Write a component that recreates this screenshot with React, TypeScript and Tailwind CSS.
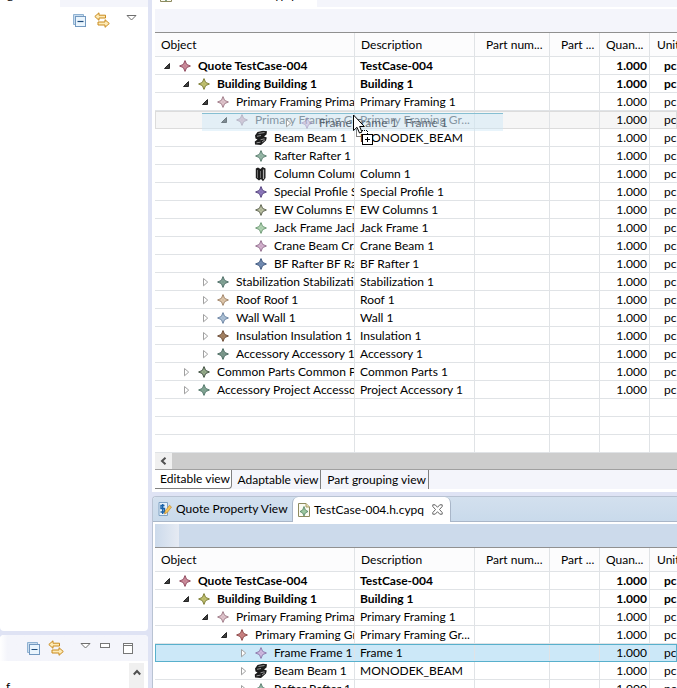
import React from "react";

type Row = {
  depth: number;
  icon: string;
  fill?: string;
  stroke?: string;
  state?: "open" | "closed" | "leaf";
  object: string;
  description: string;
  bold?: boolean;
  mark?: "hover" | "selected";
};

const editorRows: Row[] = [
  { depth: 0, icon: "star", fill: "#d99aa8", stroke: "#8f4a5e", state: "open", object: "Quote TestCase-004", description: "TestCase-004", bold: true },
  { depth: 1, icon: "star", fill: "#cfcf7c", stroke: "#7d7d35", state: "open", object: "Building Building 1", description: "Building 1", bold: true },
  { depth: 2, icon: "star", fill: "#ecd3da", stroke: "#a07c88", state: "open", object: "Primary Framing Primary Framing 1", description: "Primary Framing 1" },
  { depth: 3, icon: "star", fill: "#dcb9c8", stroke: "#a48d9f", state: "open", object: "Primary Framing Group 1", description: "Primary Framing Gr...", mark: "hover" },
  { depth: 4, icon: "beam", state: "leaf", object: "Beam Beam 1", description: "MONODEK_BEAM" },
  { depth: 4, icon: "star", fill: "#a3c4b3", stroke: "#5c7f70", state: "leaf", object: "Rafter Rafter 1", description: "" },
  { depth: 4, icon: "column", state: "leaf", object: "Column Column 1", description: "Column 1" },
  { depth: 4, icon: "star", fill: "#9a86c9", stroke: "#55437f", state: "leaf", object: "Special Profile Special", description: "Special Profile 1" },
  { depth: 4, icon: "star", fill: "#cdd3b2", stroke: "#5e6450", state: "leaf", object: "EW Columns EW Columns", description: "EW Columns 1" },
  { depth: 4, icon: "star", fill: "#c0e0c0", stroke: "#6f9a76", state: "leaf", object: "Jack Frame Jack Frame 1", description: "Jack Frame 1" },
  { depth: 4, icon: "star", fill: "#e0bfdc", stroke: "#94708f", state: "leaf", object: "Crane Beam Crane Beam 1", description: "Crane Beam 1" },
  { depth: 4, icon: "star", fill: "#7f97bd", stroke: "#3f587f", state: "leaf", object: "BF Rafter BF Rafter 1", description: "BF Rafter 1" },
  { depth: 2, icon: "star", fill: "#8fae9f", stroke: "#4f6f68", state: "closed", object: "Stabilization Stabilization 1", description: "Stabilization 1" },
  { depth: 2, icon: "star", fill: "#ead5b9", stroke: "#a08468", state: "closed", object: "Roof Roof 1", description: "Roof 1" },
  { depth: 2, icon: "star", fill: "#b9cde0", stroke: "#6c84a3", state: "closed", object: "Wall Wall 1", description: "Wall 1" },
  { depth: 2, icon: "star", fill: "#b08d6c", stroke: "#6c4c36", state: "closed", object: "Insulation Insulation 1", description: "Insulation 1" },
  { depth: 2, icon: "star", fill: "#86a394", stroke: "#4c6b62", state: "closed", object: "Accessory Accessory 1", description: "Accessory 1" },
  { depth: 1, icon: "star", fill: "#a9c09a", stroke: "#3f4f40", state: "closed", object: "Common Parts Common Parts", description: "Common Parts 1" },
  { depth: 1, icon: "star", fill: "#8db09c", stroke: "#52766a", state: "closed", object: "Accessory Project Accessory 1", description: "Project Accessory 1" },
];

const previewRows: Row[] = [
  editorRows[0],
  editorRows[1],
  editorRows[2],
  { ...editorRows[3], fill: "#d79090", stroke: "#8c4747", mark: undefined },
  { depth: 4, icon: "star", fill: "#dcc6ea", stroke: "#8d78ab", state: "closed", object: "Frame Frame 1", description: "Frame 1", mark: "selected" },
  { ...editorRows[4], state: "closed" },
  { ...editorRows[5], state: "closed" },
];

const StarIcon = ({ fill, stroke }: { fill?: string; stroke?: string }) => (
  <svg className="size-3 shrink-0" viewBox="0 0 12 12" aria-hidden="true">
    <path
      d="M6 .6 7.6 4.4 11.4 6 7.6 7.6 6 11.4 4.4 7.6 .6 6 4.4 4.4Z"
      fill={fill}
      stroke={stroke}
      strokeWidth="1"
      strokeLinejoin="round"
    />
    <path d="M6 3V9M3 6H9" stroke={stroke} strokeWidth=".5" opacity=".6" />
  </svg>
);

const BeamIcon = () => (
  <svg className="-ml-px h-4 w-[14px] shrink-0" viewBox="0 0 14 16" aria-hidden="true">
    <path d="M3.500 2 9 .8 13 1.200 12.500 4.500 10 6.500 12.800 7.500 12 10.500 7 15 1 14.500 .8 11.500 3.500 9.500 1.500 8.500 1 5.500Z" fill="#1c1c1c" />
    <path d="M4.500 3.500 10.500 2.500M3 6.300 7 5.500M6.500 9.800 10.500 8.800M2.500 12.800 6.500 12.200M8 12 11 9.800" stroke="#a0a0a0" strokeWidth=".9" />
  </svg>
);

const ColumnIcon = () => (
  <svg className="h-4 w-3 shrink-0" viewBox="0 0 12 16" aria-hidden="true">
    <path d="M.8 2.500 3 1.500 5.500 3 7.500 1 10.500 2.500V12L8 15.200 6 13 4 14.500 .8 12Z" fill="#1d1d1d" />
    <path d="M2.500 4V12M5.500 5V12" stroke="#777" strokeWidth=".9" />
    <path d="M8.500 3.500V13" stroke="#aaa" strokeWidth="1.200" />
  </svg>
);

const RowIcon = ({ row }: { row: Row }) => {
  if (row.icon === "beam") return <BeamIcon />;
  if (row.icon === "column") return <ColumnIcon />;
  return <StarIcon fill={row.fill} stroke={row.stroke} />;
};

const Twisty = ({ state }: { state?: string }) => (
  <svg className="mt-px h-3 w-2 shrink-0" viewBox="0 0 8 12" aria-hidden="true">
    {state === "open" && <path d="M6.500 3.500V8.500H1.500Z" fill="#404040" stroke="#262626" />}
    {state === "closed" && <path d="M2.500 2.500V9.800L6.700 6.100Z" fill="#fff" stroke="#a0a0a0" />}
  </svg>
);

const CollapseIcon = () => (
  <svg className="size-[14px]" viewBox="0 0 14 14" aria-hidden="true">
    <path d="M.5 10.500V.5H10.500V2.500H2.500V10.500Z" fill="#c9dcee" stroke="#8fb2d2" />
    <rect x="2.500" y="2.500" width="10" height="10" fill="#eaf5fd" stroke="#7399c0" />
    <path d="M4.500 7.500H10.500" stroke="#1f4c7c" strokeWidth="1.200" />
  </svg>
);

const LinkIcon = () => (
  <svg className="size-4" viewBox="0 0 16 16" aria-hidden="true">
    <path d="M.8 4.500 5 .8V3.200H11.500V6H5V8.300Z" fill="#fdeab6" stroke="#c98a1c" strokeLinejoin="round" />
    <path d="M15.300 11.500 11 7.700V10H4V13H11V15.300Z" fill="#fdeab6" stroke="#c98a1c" strokeLinejoin="round" />
  </svg>
);

const MenuIcon = () => (
  <svg className="h-[6px] w-[11px]" viewBox="0 0 11 6" aria-hidden="true">
    <path d="M1 .5H10L5.500 5Z" fill="#fff" stroke="#6e6e6e" />
  </svg>
);

const FileIcon = () => (
  <svg className="h-[14px] w-3 shrink-0" viewBox="0 0 12 14" aria-hidden="true">
    <path d="M.5 .5H8L11.500 4V13.500H.5Z" fill="#fbfbf2" stroke="#8d8a5e" />
    <path d="M8 .5V4H11.500" fill="#e8dfb0" stroke="#a89d66" />
    <path d="M6 3.500 7.300 7 10 8.500 7.300 10 6 13 4.700 10 2 8.500 4.700 7Z" fill="#9cc79f" stroke="#4f8060" strokeWidth=".8" />
  </svg>
);

const QuoteIcon = () => (
  <svg className="h-[14px] w-[14px] shrink-0" viewBox="0 0 14 14" aria-hidden="true">
    <path d="M1 .5H9.500V13.500H1Z" fill="#e6f1fa" stroke="#7fa2c4" />
    <path d="M6.500 3.500H3V6.500H6.500V10H2.500M4.700 2V12" fill="none" stroke="#1a62a8" strokeWidth="1.400" />
    <path d="M6.500 12 7.300 8.800 11.500 3.300 13.500 5 9.300 10.500Z" fill="#f6c65a" stroke="#c08a30" strokeWidth=".7" />
  </svg>
);

const CloseIcon = () => (
  <svg className="size-[11px]" viewBox="0 0 11 11" aria-hidden="true">
    <path
      d="M.8 .8H3.200L5.500 3.300 7.800 .8H10.200V2.500L7.500 5.500 10.200 8.500V10.200H7.800L5.500 7.700 3.200 10.200H.8V8.500L3.500 5.500 .8 2.500Z"
      fill="#fff"
      stroke="#555"
      strokeWidth=".9"
    />
  </svg>
);

const DropCursor = () => (
  <svg className="absolute left-[197px] top-[81px] h-8 w-6" viewBox="0 0 24 32" aria-hidden="true">
    <path d="M4.500 15.500V22.500H9M8 16.500H15.500V20" fill="none" stroke="#000" strokeDasharray="1 1" />
    <path d="M1.500 1V16.500L5 13.300 7.500 19 10 18 7.600 12.500H12.300Z" fill="#fff" stroke="#000" />
    <rect x="10.500" y="20.500" width="10" height="10" fill="#fff" stroke="#000" />
    <path d="M13 25.500H18M15.500 23V28" stroke="#000" />
  </svg>
);

const cell = "overflow-hidden border-r border-b border-[#e0e3e6] p-0 whitespace-nowrap last:border-r-0";
const rowMark = {
  hover: "bg-[#f6f6f6] text-[#4c5460] outline outline-[#dcdcdc] -outline-offset-1",
  selected: "bg-[#cce8f8] outline outline-[#58b0cc] -outline-offset-1",
};

const TreeTable = ({ rows, blank = 0 }: { rows: Row[]; blank?: number }) => (
  <table className="w-full table-fixed border-separate border-spacing-0 bg-white leading-4">
    <colgroup>
      <col className="w-[200px]" />
      <col className="w-[120px]" />
      <col className="w-[75px]" />
      <col className="w-[50px]" />
      <col className="w-[50px]" />
      <col />
    </colgroup>
    <thead>
      <tr className="h-6 bg-[#fcfcfd] text-left [&>th]:font-normal">
        <th className={`${cell} pl-[6px]`}>Object</th>
        <th className={`${cell} pl-[6px]`}>Description</th>
        <th className={`${cell} pl-[11px]`}>Part num...</th>
        <th className={`${cell} pl-[11px]`}>Part ...</th>
        <th className={`${cell} pl-[6px]`}>Quan...</th>
        <th className={`${cell} pl-[7px]`}>Unit</th>
      </tr>
    </thead>
    <tbody>
      {rows.map((row, i) => (
        <tr key={i} className={`h-[18px] ${row.bold ? "font-bold" : ""} ${row.mark ? rowMark[row.mark] : ""}`}>
          <td className={cell}>
            <div className="flex h-[17px] items-center" style={{ paddingLeft: 8 + row.depth * 19 }}>
              <Twisty state={row.state} />
              <span className="flex w-[27px] shrink-0 items-center pl-2">
                <RowIcon row={row} />
              </span>
              <span>{row.object}</span>
            </div>
          </td>
          <td className={`${cell} pl-[5px]`}>{row.description}</td>
          <td className={cell} />
          <td className={cell} />
          <td className={`${cell} pr-[2px] text-right text-black`}>1.000</td>
          <td className={`${cell} pl-[14px] text-black`}>pc</td>
        </tr>
      ))}
      {Array.from({ length: blank }, (_, i) => (
        <tr key={`blank-${i}`} className="h-[18px]">
          {[0, 1, 2, 3, 4, 5].map((c) => (
            <td key={c} className={cell} />
          ))}
        </tr>
      ))}
    </tbody>
  </table>
);

// Translucent copy of the row that follows the pointer while dragging
const DragGhost = () => (
  <div className="absolute left-[47px] top-[80px] flex h-[18px] w-[301px] items-center border-t border-[#86bfd2] bg-[#cbe6f7]/45 leading-4 text-[#3c4652]/80">
    <span className="flex w-[117px] shrink-0 items-center pl-[82px]">
      <Twisty state="closed" />
      <span className="pl-[9px] opacity-50">
        <StarIcon fill="#dcc6ea" stroke="#8d78ab" />
      </span>
    </span>
    <span className="w-[86px] shrink-0 whitespace-nowrap">Frame Frame 1</span>
    <span>Frame 1</span>
  </div>
);

const SideBar = () => (
  <aside className="flex w-[148px] shrink-0 flex-col gap-1">
    <section className="flex-1 rounded-b bg-white">
      <div className="flex h-[7px] items-end overflow-hidden leading-4">
        <span className="w-[60px] pb-1 pl-[7px]">g</span>
        <span className="h-full flex-1 bg-[#f4f5fb]" />
      </div>
      <div className="flex items-start pt-[5px] pl-[73px]">
        <button aria-label="Collapse all" className="pt-[2px]"><CollapseIcon /></button>
        <button aria-label="Link with editor" className="ml-[7px]"><LinkIcon /></button>
        <button aria-label="View menu" className="ml-4 pt-[3px]"><MenuIcon /></button>
      </div>
    </section>
    <section className="h-[53px] overflow-hidden rounded-t bg-white">
      <div className="flex h-[26px] items-start bg-gradient-to-r from-white via-[#f4f5fb] via-5% to-[#f4f5fb] pt-[5px] pl-[27px]">
        <button aria-label="Collapse all" className="pt-[2px]"><CollapseIcon /></button>
        <button aria-label="Link with editor" className="ml-[7px]"><LinkIcon /></button>
        <button aria-label="View menu" className="ml-4 pt-[3px]"><MenuIcon /></button>
        <button aria-label="Minimize" className="mt-[3px] ml-[9px] h-[5px] w-[10px] border border-[#777] bg-white" />
        <button aria-label="Maximize" className="mt-[3px] ml-[13px] h-[11px] w-[10px] border border-t-[3px] border-double border-[#777] bg-white" />
      </div>
      <div className="flex justify-between pt-[2px] pr-1">
        <span className="pt-4 pl-[6px] leading-4">f</span>
        <button aria-label="Scroll up" className="flex h-8 w-[15px] justify-center bg-[#f0f0f0] pt-[6px]">
          <svg className="h-[7px] w-2" viewBox="0 0 8 7" aria-hidden="true">
            <path d="M.8 5.500 4 2 7.200 5.500" fill="none" stroke="#505050" strokeWidth="2" />
          </svg>
        </button>
      </div>
    </section>
  </aside>
);

const EditorPanel = () => (
  <section className="shrink-0 bg-white pb-[3px] pl-[3px]">
    <div className="flex h-[7px] items-end overflow-hidden leading-4">
      <div className="flex w-[162px] items-end gap-3 pl-[5px]">
        <span className="pb-[5px]"><FileIcon /></span>
        <span className="pb-1">TestCase-004.h.cypq</span>
      </div>
      <span className="h-full flex-1 bg-[#f4f5fb]" />
    </div>
    <div className="mt-[2px] h-6 border-b border-[#909090] bg-[#f4f5fb]" />
    <div className="relative">
      <TreeTable rows={editorRows} blank={3} />
      <DragGhost />
      <DropCursor />
    </div>
    <div className="flex h-4 bg-[#cdcdcd]">
      <button aria-label="Scroll left" className="flex w-[17px] items-center justify-center bg-[#f0f0f0]">
        <svg className="h-2 w-[7px]" viewBox="0 0 7 8" aria-hidden="true">
          <path d="M5.500 .8 2 4 5.500 7.200" fill="none" stroke="#505050" strokeWidth="2" />
        </svg>
      </button>
    </div>
    <div role="tablist" className="flex h-5 border-t border-[#a0a0a0] bg-[#f4f5fb] text-left leading-4 whitespace-nowrap">
      <button role="tab" aria-selected="true" className="w-[77px] rounded-br border-r border-b border-[#808080] bg-white pl-1">Editable view</button>
      <button role="tab" aria-selected="false" className="w-[89px] border-r border-[#808080] pl-1">Adaptable view</button>
      <button role="tab" aria-selected="false" className="w-[108px] border-r border-[#808080] pl-1">Part grouping view</button>
    </div>
  </section>
);

const PreviewPanel = () => (
  <section className="min-h-0 flex-1 overflow-hidden rounded-tl border-t border-l border-[#b9c3d3] bg-white">
    <div role="tablist" className="flex h-[25px] border-b border-[#a9b6c8] bg-gradient-to-b from-[#d3e0ee] to-[#c9daeb] leading-4">
      <button role="tab" aria-selected="false" className="flex w-[139px] items-center gap-1 pl-[5px] whitespace-nowrap">
        <QuoteIcon />
        Quote Property View
      </button>
      <div className="-mb-px flex w-[159px] items-center rounded-t-md border-x border-[#a9b6c8] bg-white pl-[5px]">
        <button role="tab" aria-selected="true" className="flex w-[134px] items-center gap-1 whitespace-nowrap">
          <FileIcon />
          TestCase-004.h.cypq
        </button>
        <button aria-label="Close tab"><CloseIcon /></button>
      </div>
    </div>
    <div className="pt-[2px] pl-[2px]">
      <div className="h-6 border-b border-[#909090] bg-[#ccdaeb]">
        <div className="h-full w-6 bg-gradient-to-r from-[#ccdaeb] to-[#e6ebf3]" />
      </div>
      <TreeTable rows={previewRows} />
    </div>
  </section>
);

const App: React.FC = () => {
  return (
    <div className="flex h-screen w-full gap-1 overflow-hidden bg-[#dfe3f4] font-['Lato','Open_Sans',sans-serif] text-[12px] text-black">
      <SideBar />
      <main className="flex min-w-0 flex-1 flex-col gap-1">
        <EditorPanel />
        <PreviewPanel />
      </main>
    </div>
  );
};

export default App;
